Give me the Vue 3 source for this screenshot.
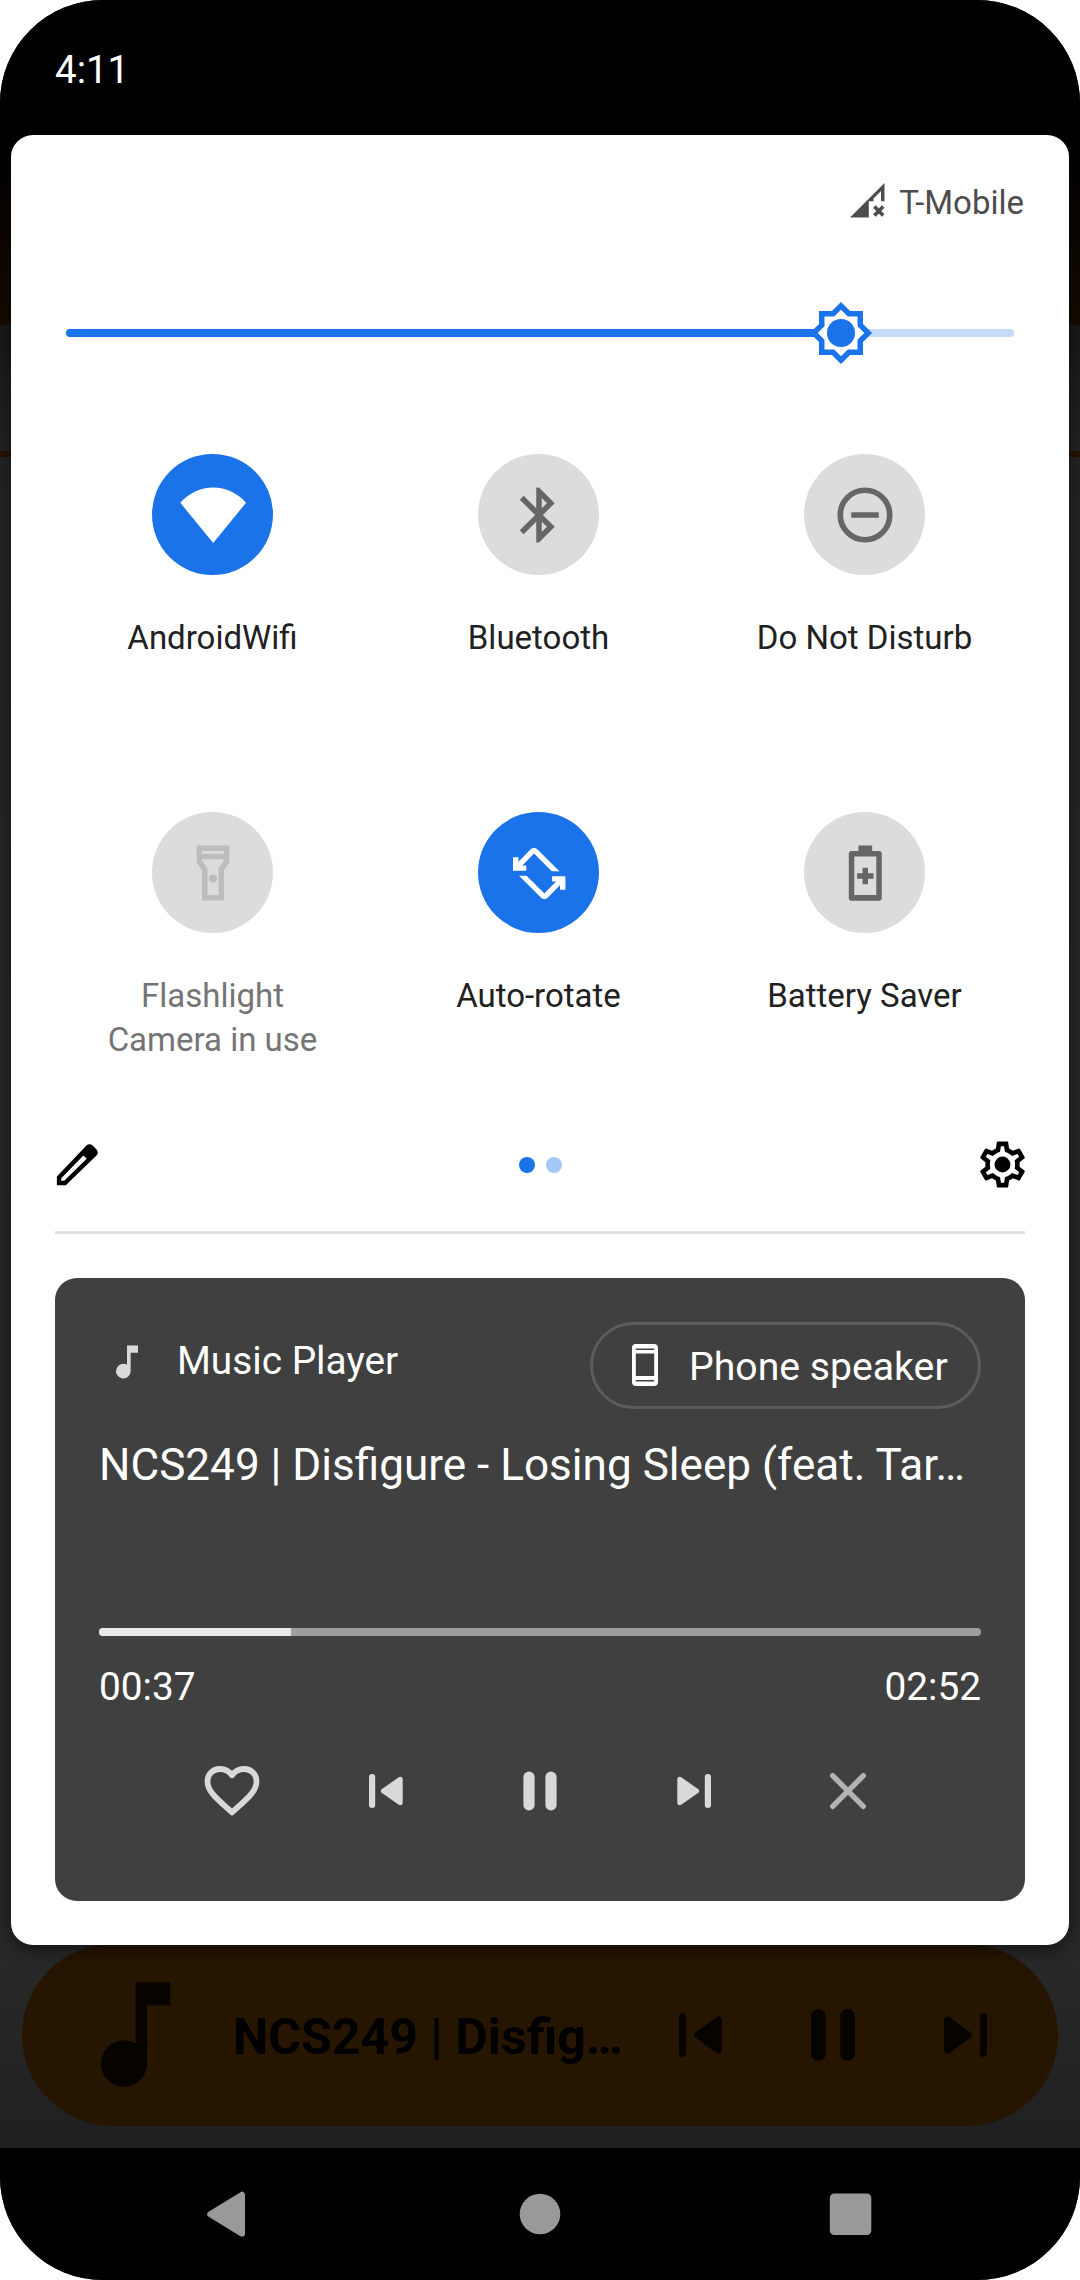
<script setup>
const tiles = [
  { id: 'wifi', lines: ['AndroidWifi'], state: 'on' },
  { id: 'bluetooth', lines: ['Bluetooth'], state: 'off' },
  { id: 'dnd', lines: ['Do Not Disturb'], state: 'off' },
  { id: 'flashlight', lines: ['Flashlight', 'Camera in use'], state: 'disabled' },
  { id: 'rotate', lines: ['Auto-rotate'], state: 'on' },
  { id: 'battery', lines: ['Battery Saver'], state: 'off' },
]
const brightness = 81.8
const played = 21.8
</script>

<template>
  <div class="phone">
    <header class="status"><span class="clock">4:11</span></header>

    <main class="panel">
      <div class="carrier">
        <svg class="signal" width="35" height="35" viewBox="0 0 35 35">
          <path fill="currentColor" d="M0 34.5 34.5 0V18.3H31V8L23.5 15.5V18.3H18.8V34.5z" />
          <path d="M24.4 23.6l8.8 9M33.2 23.6 24.4 32.6" stroke="currentColor" stroke-width="3.6" />
        </svg>
        <span class="carrier-name">T-Mobile</span>
      </div>

      <div class="slider-row">
        <div class="slider">
          <div class="slider-fill" :style="{ width: brightness + '%' }"></div>
          <svg class="thumb" :style="{ left: brightness + '%' }" width="66" height="66" viewBox="0 0 24 24">
            <path fill="#1a73e8" d="M20 8.69V4h-4.69L12 .69 8.69 4H4v4.69L.69 12 4 15.31V20h4.69L12 23.31 15.31 20H20v-4.69L23.31 12z" />
            <path fill="#fff" d="M18 9.52V6h-3.52L12 3.52 9.52 6H6v3.52L3.52 12 6 14.48V18h3.52L12 20.48 14.48 18H18v-3.52L20.48 12z" />
            <circle cx="12" cy="12" r="5.1" fill="#1a73e8" />
          </svg>
        </div>
      </div>

      <div class="tiles">
        <div v-for="t in tiles" :key="t.id" class="tile" :class="t.state">
          <div class="disc">
            <svg v-if="t.id === 'wifi'" width="66" height="66" viewBox="0 0 66 66">
              <path fill="currentColor" d="M.3 20.8C9 11 20.5 5.5 33.2 5.5S57.5 11 66 20.8L33.2 61z" />
            </svg>
            <svg v-else-if="t.id === 'bluetooth'" width="66" height="66" viewBox="0 0 24 24">
              <path fill="currentColor" d="M17.71 7.71 12 2h-1v7.59L6.41 5 5 6.41 10.59 12 5 17.59 6.41 19 11 14.41V22h1l5.71-5.71-4.3-4.29 4.3-4.29zM13 5.83l1.88 1.88L13 9.59V5.83zm1.88 10.46L13 18.17v-3.76l1.88 1.88z" />
            </svg>
            <svg v-else-if="t.id === 'dnd'" width="66" height="66" viewBox="0 0 24 24">
              <circle cx="12" cy="12" r="9" fill="none" stroke="currentColor" stroke-width="2.05" />
              <path fill="currentColor" d="M7 11h10v2H7z" />
            </svg>
            <svg v-else-if="t.id === 'flashlight'" width="66" height="66" viewBox="0 0 24 24">
              <path fill="currentColor" fill-rule="evenodd" d="M18 2H6v6l2 3v11h8V11l2-3zM16 4v1H8V4zM14 10.4V20h-4v-9.6l-2-3V7h8v.4z" />
              <circle cx="12" cy="14" r="1.5" fill="currentColor" />
            </svg>
            <svg v-else-if="t.id === 'rotate'" width="66" height="66" viewBox="0 0 66 66">
              <defs>
                <clipPath id="half"><path d="M0 0h66v31.2H0z" /></clipPath>
                <g id="turn" clip-path="url(#half)" fill="none" stroke="currentColor" stroke-width="5.4">
                  <path d="M10.5 27.7 26.4 11.3Q28 9.7 29.6 11.3L54 35.7" />
                  <path d="M9.7 17.3V28.1H20.3" />
                </g>
              </defs>
              <use href="#turn" />
              <use href="#turn" transform="rotate(180 33.2 33.5)" />
            </svg>
            <svg v-else width="66" height="66" viewBox="0 0 24 24">
              <path fill="currentColor" fill-rule="evenodd" d="M9.6 2h5v2H17.100a1 1 0 0 1 1 1v16.100a1 1 0 0 1-1 1H7.100a1 1 0 0 1-1-1V5a1 1 0 0 1 1-1h2.500zM8.100 6v14h8V6z" />
              <path fill="currentColor" d="M11.100 10.100h2v2h2v2h-2v2h-2v-2h-2v-2h2z" />
            </svg>
          </div>
          <div class="label"><div v-for="l in t.lines" :key="l">{{ l }}</div></div>
        </div>
      </div>

      <div class="footer">
        <svg width="55" height="55" viewBox="0 0 24 24">
          <path fill-rule="evenodd" d="M3 17.2V21h3.9L20.3 8.1a1.9 1.9 0 0 0 0-2.7l-1.7-1.7a1.9 1.9 0 0 0-2.7 0zM4.9 18l9.7-9.9 1.4 1.4L6.2 19.1H4.9z" />
        </svg>
        <div class="dots"><i class="dot"></i><i class="dot dim"></i></div>
        <svg width="55" height="55" viewBox="0 0 24 24">
          <path d="M19.43 12.98c.04-.32.07-.64.07-.98 0-.34-.03-.66-.07-.98l2.11-1.65c.19-.15.24-.42.12-.64l-2-3.46c-.09-.16-.26-.25-.44-.25-.06 0-.12.01-.17.03l-2.49 1c-.52-.4-1.08-.73-1.69-.98l-.38-2.65C14.46 2.18 14.25 2 14 2h-4c-.25 0-.46.18-.49.42l-.38 2.65c-.61.25-1.17.59-1.69.98l-2.49-1c-.06-.02-.12-.03-.18-.03-.17 0-.34.09-.43.25l-2 3.46c-.13.22-.07.49.12.64l2.11 1.65c-.04.32-.07.65-.07.98 0 .33.03.66.07.98l-2.11 1.65c-.19.15-.24.42-.12.64l2 3.46c.09.16.26.25.44.25.06 0 .12-.01.17-.03l2.49-1c.52.4 1.08.73 1.69.98l.38 2.65c.03.24.24.42.49.42h4c.25 0 .46-.18.49-.42l.38-2.65c.61-.25 1.17-.59 1.69-.98l2.49 1c.06.02.12.03.18.03.17 0 .34-.09.43-.25l2-3.46c.12-.22.07-.49-.12-.64l-2.11-1.65zm-1.98-1.71c.04.31.05.52.05.73 0 .21-.02.43-.05.73l-.14 1.13.89.7 1.08.84-.7 1.21-1.27-.51-1.04-.42-.9.68c-.43.32-.84.56-1.25.73l-1.06.43-.16 1.13-.2 1.35h-1.4l-.19-1.35-.16-1.13-1.06-.43c-.43-.18-.83-.41-1.23-.71l-.91-.7-1.06.43-1.27.51-.7-1.21 1.08-.84.89-.7-.14-1.13c-.03-.31-.05-.54-.05-.74s.02-.43.05-.73l.14-1.13-.89-.7-1.08-.84.7-1.21 1.27.51 1.04.42.9-.68c.43-.32.84-.56 1.25-.73l1.06-.43.16-1.13.2-1.35h1.39l.19 1.35.16 1.13 1.06.43c.43.18.83.41 1.23.71l.91.7 1.06-.43 1.27-.51.7 1.21-1.07.85-.89.7.14 1.13z" />
          <circle cx="12" cy="12" r="3.45" />
        </svg>
      </div>
      <div class="divider"></div>

      <section class="media">
        <div class="media-head">
          <div class="app">
            <svg width="44" height="44" viewBox="0 0 24 24"><path fill="#d9d9d9" d="M12 3v10.55A4 4 0 1 0 14 17V7h4V3z" /></svg>
            <span class="app-name">Music Player</span>
          </div>
          <div class="chip">
            <svg width="26" height="42" viewBox="0 0 26 42">
              <path fill="#fff" fill-rule="evenodd" d="M4 0h18a4 4 0 0 1 4 4v34a4 4 0 0 1-4 4H4a4 4 0 0 1-4-4V4a4 4 0 0 1 4-4zM3.8 4.4v1.6h18.4V4.400zM3.800 9.500V32h18.400V9.500zM3.800 36v1.600h18.400V36z" />
            </svg>
            <span class="chip-name">Phone speaker</span>
          </div>
        </div>
        <div class="title">NCS249 | Disfigure - Losing Sleep (feat. Tar…</div>
        <div class="progress"><div class="played" :style="{ width: played + '%' }"></div></div>
        <div class="times"><span>00:37</span><span>02:52</span></div>
        <div class="controls">
          <svg width="66" height="66" viewBox="0 0 24 24">
            <path fill="none" stroke="#d9d9d9" stroke-width="2.1" stroke-linejoin="round" d="M12 19.8 10.6 18.500C6 14.400 3.100 11.900 3.100 8.500 3.100 5.900 5 4 7.600 4c1.700 0 3.400.8 4.400 2.300C13 4.800 14.700 4 16.400 4c2.600 0 4.500 1.900 4.500 4.500 0 3.400-2.900 5.900-7.500 10z" />
          </svg>
          <svg width="66" height="66" viewBox="0 0 66 66" fill="#d9d9d9">
            <rect x="16" y="16" width="6.2" height="34" rx="3" />
            <path stroke="#d9d9d9" stroke-width="5" stroke-linejoin="round" d="M30.4 33 47.2 21.3V44.7z" />
          </svg>
          <svg width="66" height="66" viewBox="0 0 66 66" fill="#d9d9d9">
            <rect x="16.4" y="13.5" width="11.2" height="39" rx="5.6" /><rect x="38.4" y="13.5" width="11.2" height="39" rx="5.6" />
          </svg>
          <svg width="66" height="66" viewBox="0 0 66 66" fill="#d9d9d9">
            <rect x="43.8" y="16" width="6.2" height="34" rx="3" />
            <path stroke="#d9d9d9" stroke-width="5" stroke-linejoin="round" d="M35.6 33 18.8 21.3V44.7z" />
          </svg>
          <svg width="66" height="66" viewBox="0 0 66 66">
            <path stroke="#b3b3b3" stroke-width="5.4" stroke-linecap="round" d="M17.7 17.7l30.6 30.6M48.3 17.7 17.7 48.3" />
          </svg>
        </div>
      </section>
    </main>

    <section class="mini">
      <svg class="mini-note" width="139" height="139" viewBox="0 0 24 24"><path fill="#070400" d="M12 3v10.55A4 4 0 1 0 14 17V7h4V3z" /></svg>
      <div class="mini-title">NCS249 | Disfig…</div>
      <div class="mini-controls">
        <svg width="88" height="88" viewBox="0 0 66 66" fill="#070400">
          <rect x="16.5" y="16.5" width="5.2" height="33" rx="2.6" />
          <path stroke="#070400" stroke-width="5" stroke-linejoin="round" d="M30.4 33 46.2 21.5V44.5z" />
        </svg>
        <svg width="88" height="88" viewBox="0 0 66 66" fill="#070400">
          <rect x="16.5" y="13.5" width="11" height="39" rx="5.5" /><rect x="38.5" y="13.5" width="11" height="39" rx="5.5" />
        </svg>
        <svg width="88" height="88" viewBox="0 0 66 66" fill="#070400">
          <rect x="44.3" y="16.5" width="5.2" height="33" rx="2.6" />
          <path stroke="#070400" stroke-width="5" stroke-linejoin="round" d="M35.6 33 19.8 21.5V44.5z" />
        </svg>
      </div>
    </section>

    <nav class="nav">
      <svg width="56" height="56" viewBox="0 0 56 56"><path fill="#999" stroke="#999" stroke-width="6" stroke-linejoin="round" d="M9.2 28.2 41 8.7V47.7z" /></svg>
      <svg width="56" height="56" viewBox="0 0 56 56"><circle cx="28" cy="28" r="20.3" fill="#999" /></svg>
      <svg width="56" height="56" viewBox="0 0 56 56"><rect x="6.8" y="7.5" width="41.5" height="41.5" rx="4.5" fill="#999" /></svg>
    </nav>
  </div>
</template>

<style>
body { background: #fff; }
</style>

<style scoped>
.phone {
  width: 1080px;
  height: 2280px;
  border-radius: 103px;
  overflow: hidden;
  display: flex;
  flex-direction: column;
  font-family: Roboto, "Liberation Sans", sans-serif;
  background: linear-gradient(#000 0, #000 150px, #160b00 325px, #181818 325px, #232323 451px, #261200 451px, #261200 457px, #242424 457px, #282828 1200px, #282828 1950px, #202020 2148px);
}
svg { display: block; flex: none; }
.status { height: 135px; flex: none; background: #000; }
.clock { display: block; margin-left: 55px; line-height: 140px; font-size: 38.5px; color: #fff; }

.panel {
  flex: none;
  height: 1810px;
  margin: 0 11px;
  padding: 0 44px;
  box-sizing: border-box;
  border-radius: 22px;
  background: #fff;
  position: relative;
  z-index: 1;
  box-shadow: 0 5px 18px rgba(0, 0, 0, 0.5);
}
.carrier { height: 135px; display: flex; align-items: center; justify-content: flex-end; color: #4d4d4d; }
.signal { margin: -4px 14px 0 0; }
.carrier-name { font-size: 33px; line-height: 44px; margin-right: 1px; }

.slider-row { height: 126px; display: flex; align-items: center; padding: 0 11px; }
.slider { flex: 1; height: 8px; border-radius: 4px; background: #c5dbf9; position: relative; }
.slider-fill { height: 8px; border-radius: 4px; background: #1a73e8; }
.thumb { position: absolute; top: 50%; transform: translate(-50%, -50%); }

.tiles {
  margin: 58px 0 0 -5.5px;
  display: grid;
  grid-template-columns: repeat(3, 326px);
  grid-template-rows: 358px 260px;
}
.tile { display: flex; flex-direction: column; align-items: center; color: #666; }
.disc { width: 121px; height: 121px; border-radius: 50%; background: #dcdcdc; display: flex; align-items: center; justify-content: center; }
.on .disc { background: #1a73e8; color: #fff; }
.disabled .disc { color: #bdbdbd; }
.label { margin-top: 41px; font-size: 33px; line-height: 44px; text-align: center; white-space: nowrap; color: #212121; }
.disabled .label { color: #757575; }

.footer { margin: 52.5px -5px 0.5px -5px; height: 80px; display: flex; align-items: center; justify-content: space-between; }
.dots { display: flex; gap: 11px; }
.dot { width: 16px; height: 16px; border-radius: 50%; background: #1a73e8; }
.dim { background: #a3c7f6; }
.divider { margin-top: 26px; height: 3px; background: #e2e2e2; }

.media { margin-top: 44px; height: 623px; box-sizing: border-box; padding: 44px 44px 0; border-radius: 22px; background: #404040; color: #fff; font-size: 38.8px; }
.media-head { height: 87px; display: flex; justify-content: space-between; align-items: flex-start; }
.app { height: 80px; margin-left: 6px; display: flex; align-items: center; gap: 28px; }
.app-name { margin-top: -3px; }
.chip { width: 391px; height: 87px; box-sizing: border-box; border: 3px solid #5c5c5c; border-radius: 44px; padding-left: 39px; display: flex; align-items: center; gap: 31px; }
.chip-name { margin-top: 3px; font-size: 39.2px; white-space: nowrap; }
.title { margin-top: 30px; height: 52px; line-height: 52px; font-size: 44.1px; white-space: nowrap; }
.progress { margin-top: 137px; height: 8px; border-radius: 4px; background: #9e9e9e; overflow: hidden; }
.played { height: 8px; background: #e8e8e8; }
.times { margin-top: 28px; height: 46px; line-height: 46px; display: flex; justify-content: space-between; }
.controls { margin: 41px auto 0; width: 770px; height: 80px; display: flex; align-items: center; justify-content: space-around; }

.mini { flex: none; height: 182px; margin: -1px 22px 22px; border-radius: 91px; background: #261500; display: flex; align-items: center; }
.mini-note { margin: -1px 0 0 44px; }
.mini-title { margin: 4px 0 0 28px; width: 402px; font-size: 50px; font-weight: 700; line-height: 60px; white-space: nowrap; color: #000; }
.mini-controls { display: flex; gap: 44px; margin-left: 22px; }

.nav { flex: 1; background: #000; display: flex; align-items: center; justify-content: center; gap: 255px; }
</style>
